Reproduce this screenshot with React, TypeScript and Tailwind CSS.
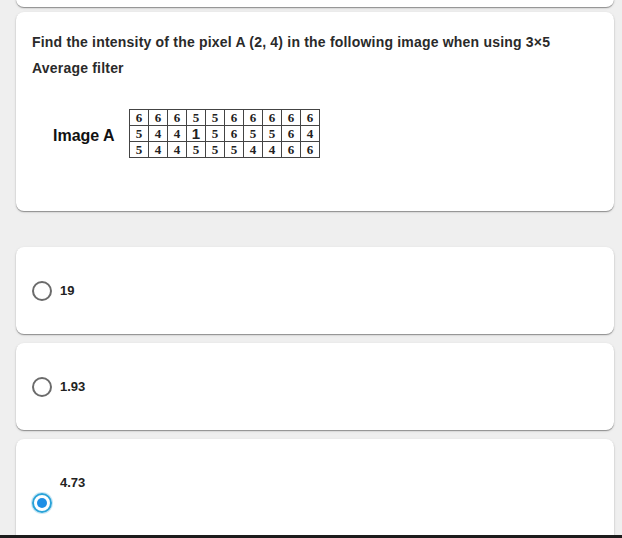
import React from "react";

const rows = [
  ["6", "6", "6", "5", "5", "6", "6", "6", "6", "6"],
  ["5", "4", "4", "1", "5", "6", "5", "5", "6", "4"],
  ["5", "4", "4", "5", "5", "5", "4", "4", "6", "6"],
];

function Card({ children, className = "" }: { children?: React.ReactNode; className?: string }) {
  return (
    <div
      className={
        "ml-4 mr-2 rounded-lg bg-white shadow-[0_1px_1px_rgba(0,0,0,0.35),0_1px_3px_rgba(0,0,0,0.12)] " +
        className
      }
    >
      {children}
    </div>
  );
}

function Radio({ checked = false }: { checked?: boolean }) {
  if (checked) {
    return (
      <span className="flex h-[20px] w-[20px] items-center justify-center rounded-full border-[2px] border-[#2aa3d8] shadow-[0_0_0_1px_rgba(30,155,215,0.25)]">
        <span className="h-[10px] w-[10px] rounded-full bg-[#1e8fe5]" />
      </span>
    );
  }
  return <span className="block h-[20px] w-[20px] rounded-full border-[2px] border-[#6b6b6b]" />;
}

export default function App() {
  return (
    <div
      className="flex h-[538px] w-[622px] flex-col overflow-hidden bg-[#efefef] text-[#1f1f1f]"
      style={{ fontFamily: '"Liberation Sans", Arial, sans-serif' }}
    >
      <Card className="-mt-4 h-[23px] shrink-0" />
      <Card className="mt-[5px] h-[199px] shrink-0 px-4 pt-[17px]">
        <p className="text-[14px] font-bold leading-[26px] tracking-[0.2px] text-[#2a2a2a]">
          Find the intensity of the pixel A (2, 4) in the following image when using 3×5
        </p>
        <p className="text-[14px] font-bold leading-[26px] tracking-[0.2px] text-[#2a2a2a]">Average filter</p>
        <div className="mt-[28px] flex items-center">
          <span className="ml-[21px] mt-[4px] w-[76px] text-[16px] font-bold text-[#111]">Image A</span>
          <table
            className="border-collapse border border-[#333] text-[13px] font-bold leading-[14px] text-[#222]"
            style={{ fontFamily: '"Liberation Serif", "Times New Roman", serif' }}
          >
            <tbody>
              {rows.map((r, i) => (
                <tr key={i}>
                  {r.map((c, j) => (
                    <td
                      key={j}
                      className={
                        "h-[16px] w-[19px] border border-[#444] p-0 text-center " +
                        (i === 1 && j === 3 ? "text-[15px]" : "")
                      }
                      style={i === 1 && j === 3 ? { fontFamily: '"Liberation Sans", Arial, sans-serif' } : undefined}
                    >
                      {c}
                    </td>
                  ))}
                </tr>
              ))}
            </tbody>
          </table>
        </div>
      </Card>

      <Card className="mt-[36px] flex h-[87px] shrink-0 items-center px-4">
        <Radio />
        <span className="ml-[8px] text-[13px] font-bold text-[#222]">19</span>
      </Card>
      <Card className="mt-[9px] flex h-[87px] shrink-0 items-center px-4">
        <Radio />
        <span className="ml-[8px] text-[13px] font-bold text-[#222]">1.93</span>
      </Card>
      <Card className="mt-[9px] h-[120px] shrink-0 px-4 pt-[36px]">
        <span className="ml-[28px] block text-[13px] font-bold leading-[16px] text-[#222]">4.73</span>
        <div className="mt-[2px]">
          <Radio checked />
        </div>
      </Card>
      <div className="fixed bottom-0 left-0 h-[3px] w-[622px] bg-[#1c1c1c]" />
    </div>
  );
}
